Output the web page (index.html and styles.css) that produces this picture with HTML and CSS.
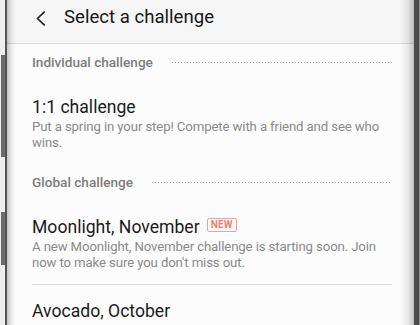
FILE: index.html
```html
<!DOCTYPE html>
<html lang="en">
<head>
<meta charset="utf-8">
<title>Select a challenge</title>
<link rel="stylesheet" href="styles.css">
</head>
<body>
<div class="phone">
  <div class="rail-left">
    <div class="rail-gap rail-gap-1"></div>
    <div class="rail-key rail-key-1"></div>
    <div class="rail-gap rail-gap-2"></div>
    <div class="rail-key rail-key-2"></div>
  </div>
  <div class="screen">
    <header class="appbar">
      <svg class="back" width="11" height="15" viewBox="0 0 11 15" aria-hidden="true">
        <polyline points="9.2,1.2 2.4,7.5 9.2,13.8" fill="none" stroke="#222" stroke-width="1.7" stroke-linecap="round" stroke-linejoin="round"/>
      </svg>
      <h1 class="title">Select a challenge</h1>
    </header>
    <main class="list">
      <div class="section">
        <span class="section-label">Individual challenge</span>
        <span class="dots"></span>
      </div>
      <div class="item">
        <div class="item-title">1:1 challenge</div>
        <p class="item-desc">Put a spring in your step! Compete with a friend and see who wins.</p>
      </div>
      <div class="section">
        <span class="section-label">Global challenge</span>
        <span class="dots"></span>
      </div>
      <div class="item item-divided">
        <div class="item-title">Moonlight, November <span class="badge">NEW</span></div>
        <p class="item-desc">A new Moonlight, November challenge is starting soon. Join now to make sure you don't miss out.</p>
      </div>
      <div class="item">
        <div class="item-title">Avocado, October</div>
      </div>
    </main>
  </div>
  <div class="rail-right"></div>
</div>
</body>
</html>
```

FILE: styles.css
```css
* { box-sizing: border-box; }
html, body { margin: 0; padding: 0; }
body {
  width: 420px;
  height: 325px;
  overflow: hidden;
  background: #fcfcfc;
  font-family: Roboto, "Noto Sans", "Liberation Sans", sans-serif;
}
.phone {
  display: flex;
  height: 325px;
}
.rail-left {
  width: 7px;
  flex: none;
  display: flex;
  flex-direction: column;
  background: #eeeeee;
  border-right: 2px solid #545454;
}
.rail-gap-1 { height: 55px; }
.rail-gap-2 { height: 55px; }
.rail-key {
  margin-left: 1px;
  background: #6c6c6c;
}
.rail-key-1 { height: 102px; }
.rail-key-2 { height: 53px; }
.rail-right {
  width: 6px;
  flex: none;
  background: #4b4b4b;
  border-right: 1px solid #8d8d8d;
}
.screen {
  flex: 1;
  position: relative;
  background: #fcfcfc;
  overflow: hidden;
}
.screen::before,
.screen::after {
  content: "";
  position: absolute;
  top: 0;
  bottom: 0;
  pointer-events: none;
}
.screen::before {
  left: 0;
  width: 9px;
  background: linear-gradient(to right, rgba(0,0,0,0.22), rgba(0,0,0,0.07) 50%, rgba(0,0,0,0));
}
.screen::after {
  right: 0;
  width: 15px;
  background: linear-gradient(to left, rgba(0,0,0,0.24), rgba(0,0,0,0.08) 40%, rgba(0,0,0,0));
}
.appbar {
  height: 44px;
  display: flex;
  align-items: flex-start;
  padding: 5px 0 0 28px;
  background: #f6f6f6;
  border-bottom: 1px solid #d9d9d9;
}
.back {
  margin-top: 6px;
  flex: none;
}
.title {
  margin: 0 0 0 18px;
  font-size: 18.6px;
  line-height: 24px;
  font-weight: 400;
  color: #161616;
}
.list {
  padding: 0 22px 0 25px;
}
.section {
  display: flex;
  align-items: center;
  padding: 8px 0 9px;
  height: 37px;
}
.section-label {
  font-size: 13.6px;
  line-height: 20px;
  font-weight: 500;
  color: #7c7c7c;
  flex: none;
}
.dots {
  flex: 1;
  height: 1px;
  margin-left: 19px;
  margin-top: 1px;
  background-image: linear-gradient(to right, #a3a3a3 1px, transparent 1px);
  background-size: 3px 1px;
  background-repeat: repeat-x;
}
.item {
  padding: 14px 0 13px;
}
.item-divided {
  border-bottom: 1px solid #dcdcdc;
}
.item-title {
  display: flex;
  align-items: center;
  font-size: 17.6px;
  line-height: 24px;
  color: #1a1a1a;
}
.badge {
  margin: 0 0 4px 7px;
  height: 14px;
  padding: 0 3px;
  display: flex;
  align-items: center;
  border: 1.5px solid #f3a097;
  border-radius: 2px;
  font-size: 10px;
  font-weight: 700;
  line-height: 10px;
  color: #f07c71;
  letter-spacing: 0.2px;
}
.item-desc {
  margin: 0;
  font-size: 13.2px;
  line-height: 16px;
  letter-spacing: -0.12px;
  color: #8a8a8a;
}
```
